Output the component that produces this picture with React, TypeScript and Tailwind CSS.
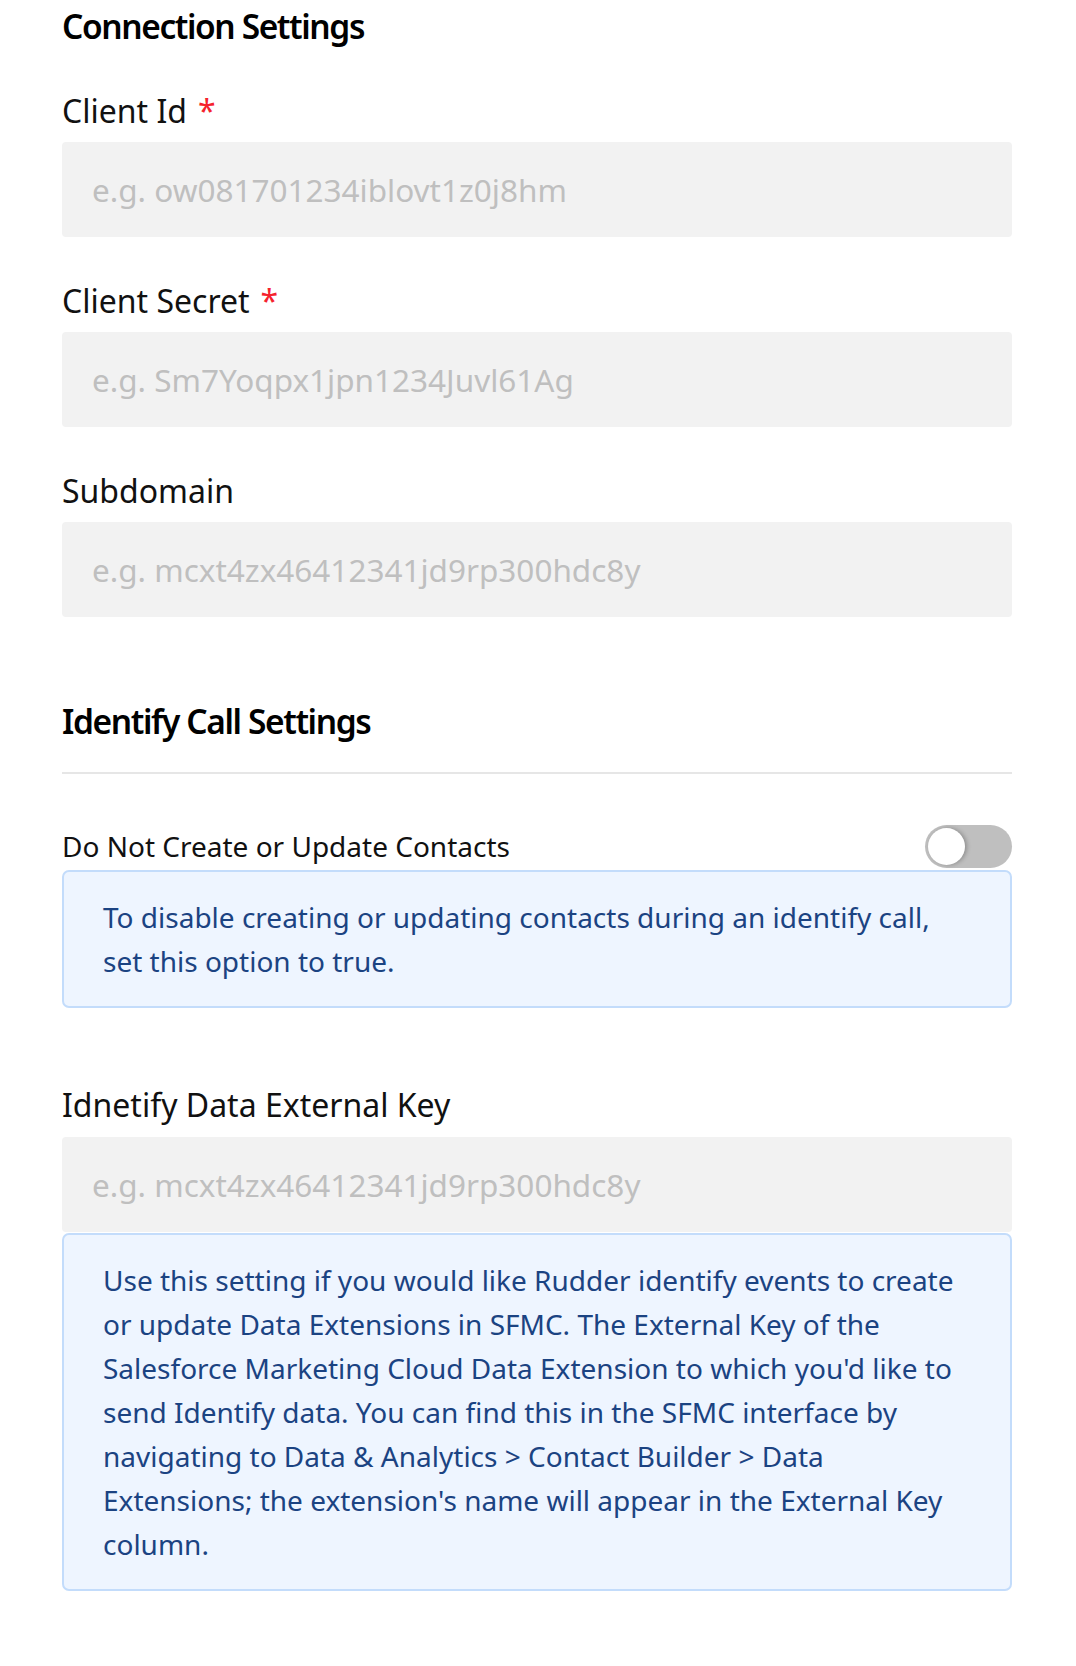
import React from "react";

function Label({ text, required }: { text: string; required?: boolean }) {
  return (
    <div className="text-[32px] leading-[44px] text-[#111111]">
      {text}
      {required && <span className="ml-[11px] text-[#f5222d]">*</span>}
    </div>
  );
}

function Field({ placeholder }: { placeholder: string }) {
  return (
    <input
      readOnly
      placeholder={placeholder}
      className="block w-full h-[95px] rounded-[4px] bg-[#f2f2f2] px-[30px] text-[31.5px] text-[#111] placeholder:text-[#bfbfbf] outline-none font-['Noto_Sans',sans-serif]"
    />
  );
}

function Info({ children }: { children: React.ReactNode }) {
  return (
    <div className="rounded-[7px] border-2 border-[#c3dcfb] bg-[#eef5ff] px-[39px] py-[23px] text-[28px] leading-[44px] text-[#1b4382]">
      {children}
    </div>
  );
}

export default function App() {
  return (
    <div className="w-[1076px] min-h-[1666px] bg-white pl-[62px] pr-[64px] pt-[4px] font-['Noto_Sans',sans-serif]">
      <h2 className="text-[33.5px] font-semibold leading-[44px] tracking-[-1.4px] text-black">Connection Settings</h2>

      <div className="mt-[41px]">
        <Label text="Client Id" required />
        <div className="mt-[9px]">
          <Field placeholder="e.g. ow081701234iblovt1z0j8hm" />
        </div>
      </div>

      <div className="mt-[42px]">
        <Label text="Client Secret" required />
        <div className="mt-[9px]">
          <Field placeholder="e.g. Sm7Yoqpx1jpn1234Juvl61Ag" />
        </div>
      </div>

      <div className="mt-[42px]">
        <Label text="Subdomain" />
        <div className="mt-[9px]">
          <Field placeholder="e.g. mcxt4zx46412341jd9rp300hdc8y" />
        </div>
      </div>

      <h2 className="mt-[82px] text-[33.5px] font-semibold leading-[44px] tracking-[-1.4px] text-black">
        Identify Call Settings
      </h2>
      <div className="mt-[29px] h-[2px] bg-[#e6e6e6]" />

      <div className="mt-[49px] flex h-[46px] items-center justify-between">
        <div className="text-[28px] leading-[44px] text-[#111111]">Do Not Create or Update Contacts</div>
        <div className="relative h-[43px] w-[87px] rounded-full bg-[#bfbfbf]">
          <div className="absolute left-[3px] top-[3px] h-[37px] w-[37px] rounded-full bg-white shadow-[2px_0_4px_rgba(0,0,0,0.25)]" />
        </div>
      </div>
      <div className="mt-[1px]">
        <Info>
          To disable creating or updating contacts during an identify call, set this option to true.
        </Info>
      </div>

      <div className="mt-[75px]">
        <Label text="Idnetify Data External Key" />
        <div className="mt-[10px]">
          <Field placeholder="e.g. mcxt4zx46412341jd9rp300hdc8y" />
        </div>
      </div>
      <div className="mt-[1px]">
        <Info>
          Use this setting if you would like Rudder identify events to create or update Data Extensions in SFMC. The
          External Key of the Salesforce Marketing Cloud Data Extension to which you'd like to send Identify data. You
          can find this in the SFMC interface by navigating to Data &amp; Analytics &gt; Contact Builder &gt; Data
          Extensions; the extension's name will appear in the External Key column.
        </Info>
      </div>
    </div>
  );
}
